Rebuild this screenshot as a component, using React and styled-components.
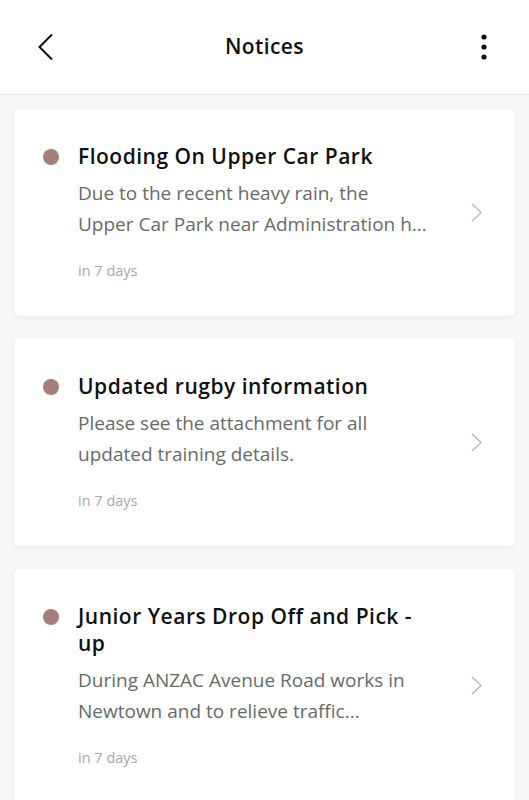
import styled, { createGlobalStyle } from 'styled-components';

const GlobalStyle = createGlobalStyle`
    body {
        margin: 0;
        background: #f7f8f9;
        font-family: "Open Sans", "Lato", sans-serif;
    }
`

const PageStyled = styled.div`
    min-height: 800px;
    background: #f7f8f9;
`

const HeaderStyled = styled.header`
    height: 95px;
    background: #fff;
    border-bottom: 1px solid #e6e7e9;
    display: flex;
    align-items: center;
    justify-content: space-between;
    padding: 0 36px 0 36px;
    box-sizing: border-box;
`

const HeaderTitle = styled.h1`
    margin: 0 0 2px 0;
    font-size: 21px;
    font-weight: 600;
    letter-spacing: 0.4px;
    color: #111;
`

const IconButton = styled.button`
    border: none;
    background: none;
    padding: 0;
    width: 18px;
    height: 28px;
    display: flex;
    align-items: center;
    justify-content: center;
    color: #111;
`

const ListStyled = styled.div`
    display: flex;
    flex-direction: column;
    gap: 23px;
    padding: 14px 14px 0 14px;
`

const CardStyled = styled.div`
    display: flex;
    align-items: center;
    background: #fff;
    border-radius: 5px;
    box-shadow: 0 2px 6px rgba(0, 0, 0, 0.06);
    padding: 34px 33px 35px 29px;
`

const BodyBlock = styled.div`
    display: flex;
    align-items: flex-start;
    flex: 1;
`

const UnreadDot = styled.span`
    width: 16px;
    height: 16px;
    border-radius: 50%;
    background: ${props => props.color || '#a57f75'};
    flex-shrink: 0;
    margin: 6px 19px 0 0;
`

const ContentStyled = styled.div`
    width: 350px;
    margin-right: 43px;
`

const TitleStyled = styled.div`
    font-size: 21px;
    font-weight: 600;
    letter-spacing: 0.5px;
    line-height: 27px;
    color: #111;
`

const SummaryStyled = styled.div`
    margin-top: 8px;
    font-size: 19px;
    line-height: 31px;
    color: #6a6a6a;
    white-space: pre-line;
`

const DateStyled = styled.div`
    margin-top: 21px;
    font-size: 14.5px;
    line-height: 20px;
    color: #a8a8a8;
`

const notices = [
    {
        title: 'Flooding On Upper Car Park',
        summary: 'Due to the recent heavy rain, the\nUpper Car Park near Administration h...',
        date: 'in 7 days',
    },
    {
        title: 'Updated rugby information',
        summary: 'Please see the attachment for all\nupdated training details.',
        date: 'in 7 days',
    },
    {
        title: 'Junior Years Drop Off and Pick - up',
        summary: 'During ANZAC Avenue Road works in\nNewtown and to relieve traffic...',
        date: 'in 7 days',
    },
]

const Chevron = ({ color = '#b9b9b9' }) => (
    <svg width="12" height="21" viewBox="0 0 12 21" fill="none">
        <path d="M1 1 L11 10.5 L1 20" stroke={color} strokeWidth="1.5" />
    </svg>
)

const NoticeCard = props => {
    return (
        <CardStyled>
            <BodyBlock>
                <UnreadDot />
                <ContentStyled>
                    <TitleStyled>{props.title}</TitleStyled>
                    <SummaryStyled>{props.summary}</SummaryStyled>
                    <DateStyled>{props.date}</DateStyled>
                </ContentStyled>
            </BodyBlock>
            <Chevron />
        </CardStyled>
    )
}

const App = () => {
    return (
        <PageStyled>
            <GlobalStyle />
            <HeaderStyled>
                <IconButton aria-label="Back">
                    <svg width="17" height="28" viewBox="0 0 17 28" fill="none">
                        <path d="M15 1.5 L2.5 14 L15 26.5" stroke="#111" strokeWidth="2" />
                    </svg>
                </IconButton>
                <HeaderTitle>Notices</HeaderTitle>
                <IconButton aria-label="More">
                    <svg width="6" height="26" viewBox="0 0 6 26" fill="#111">
                        <circle cx="3" cy="3" r="2.6" />
                        <circle cx="3" cy="13" r="2.6" />
                        <circle cx="3" cy="23" r="2.6" />
                    </svg>
                </IconButton>
            </HeaderStyled>
            <ListStyled>
                {notices.map((n, i) => <NoticeCard key={i} {...n} />)}
            </ListStyled>
        </PageStyled>
    )
}

export default App
